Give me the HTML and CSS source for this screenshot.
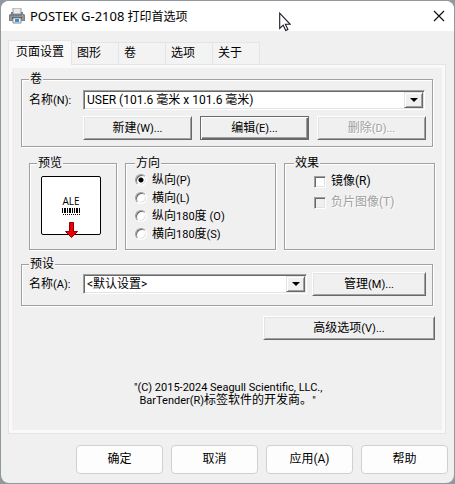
FILE: index.html
```html
<!DOCTYPE html>
<html lang="zh-CN">
<head>
    <meta charset="UTF-8">
    <meta name="viewport" content="width=device-width, initial-scale=1.0">
    <title>POSTEK G-2108 打印首选项</title>
    <link rel="stylesheet" href="styles.css">
</head>
<body>
    <main class="window">
        <header class="titlebar">
            <svg class="printer" width="16" height="16" viewBox="0 0 16 16" aria-hidden="true">
                <path d="M4 0h8v6H4z" fill="#e9eaec" stroke="#9a9da1" stroke-width="1"/>
                <path d="M2 4h2v2h8V4h2v2h1l1 1v6H0V7l1-1h1z" fill="#7b7e82"/>
                <path d="M1 8h14v4H1z" fill="#909397"/>
                <path d="M3 9h10v2H3z" fill="#4d5054"/>
                <path d="M4 10h8v5H4z" fill="#f4f8fb" stroke="#85898d" stroke-width="1"/>
                <path d="M6 11h4v3H6z" fill="#3291cc"/>
                <path d="M13 7h1v1h-1z" fill="#7ce07c"/>
            </svg>
            <h1><span class="model">POSTEK G-2108</span> 打印首选项</h1>
            <button class="close" type="button" aria-label="关闭">
                <svg width="12" height="12" viewBox="0 0 12 12"><path d="M1 1l10 10M11 1L1 11" stroke="#111" stroke-width="1.2"/></svg>
            </button>
        </header>

        <div class="tabs" role="tablist">
            <button class="tab active" type="button" role="tab" aria-selected="true">页面设置</button>
            <button class="tab" type="button" role="tab">图形</button>
            <button class="tab" type="button" role="tab">卷</button>
            <button class="tab" type="button" role="tab">选项</button>
            <button class="tab" type="button" role="tab">关于</button>
        </div>

        <section class="panel">
            <fieldset class="group">
                <legend>卷</legend>
                <div class="row">
                    <label class="name" for="stock">名称<span class="latin">(N):</span></label>
                    <div class="combo stock">
                        <select id="stock"><option>USER (101.6 毫米 x 101.6 毫米)</option></select>
                    </div>
                </div>
                <div class="row stock-buttons">
                    <button class="btn" type="button">新建<span class="latin">(W)...</span></button>
                    <button class="btn default" type="button">编辑<span class="latin">(E)...</span></button>
                    <button class="btn" type="button" disabled>删除<span class="latin">(D)...</span></button>
                </div>
            </fieldset>

            <div class="middle">
                <fieldset class="group preview">
                    <legend>预览</legend>
                    <svg width="60" height="64" viewBox="0 0 60 64">
                        <rect x=".5" y=".5" width="59" height="58" rx="1.5" fill="#fff" stroke="#000"/>
                        <text class="ale" x="30" y="29" text-anchor="middle">ALE</text>
                        <path d="M21 32h1v5h-1zM23 32h2v5h-2zM26 32h1v5h-1zM28 32h2v5h-2zM31 32h1v5h-1zM33 32h1v5h-1zM35 32h2v5h-2zM38 32h1v5h-1z"/>
                        <path d="M22 38.5h17" stroke="#000" stroke-dasharray="1 1"/>
                        <path d="M28.5 46.5h4v9h4L30.500 61.500l-6-6h4z" fill="#f00000" stroke="#8c0000"/>
                    </svg>
                </fieldset>

                <fieldset class="group options">
                    <legend>方向</legend>
                    <label class="radio"><input type="radio" name="orient" checked>纵向<span class="latin">(P)</span></label>
                    <label class="radio"><input type="radio" name="orient">横向<span class="latin">(L)</span></label>
                    <label class="radio"><input type="radio" name="orient">纵向<span class="latin">180</span>度&nbsp;<span class="latin">(O)</span></label>
                    <label class="radio"><input type="radio" name="orient">横向<span class="latin">180</span>度<span class="latin">(S)</span></label>
                </fieldset>

                <fieldset class="group options">
                    <legend>效果</legend>
                    <label class="check"><input type="checkbox">镜像(R)</label>
                    <label class="check disabled"><input type="checkbox" disabled>负片图像(T)</label>
                </fieldset>
            </div>

            <fieldset class="group preset">
                <legend>预设</legend>
                <div class="row">
                    <label class="name" for="preset">名称<span class="latin">(A):</span></label>
                    <div class="combo">
                        <select id="preset"><option>&lt;默认设置&gt;</option></select>
                    </div>
                    <button class="btn manage" type="button">管理<span class="latin">(M)...</span></button>
                </div>
            </fieldset>

            <button class="btn advanced" type="button">高级选项<span class="latin">(V)...</span></button>

            <p class="copyright"><span class="latin">"(C) 2015-2024 Seagull Scientific, LLC.,</span><br><span class="latin">&nbsp;&nbsp;BarTender(R)</span>标签软件的开发商。<span class="latin">"</span></p>
        </section>

        <footer class="actions">
            <button type="button">确定</button>
            <button type="button">取消</button>
            <button type="button">应用(A)</button>
            <button type="button">帮助</button>
        </footer>
    </main>

    <svg class="cursor" width="12" height="20" viewBox="0 0 12 20" aria-hidden="true">
        <path d="M.7 1.200v15.300l3.500-3.300 2.500 5.300 2.200-1-2.500-5.200h4.800z" fill="#fff" stroke="#1c1c28" stroke-width="1.100"/>
    </svg>
</body>
</html>
```

FILE: styles.css
```css
:root {
    --face: #f0f0f0;
    --shadow: #a0a0a0;
    --dark: #696969;
    --light: #e3e3e3;
}

* {
    box-sizing: border-box;
}

body {
    margin: 0;
    padding: 1px;
    min-height: 100vh;
    background: #8f999f;
    font-family: Roboto, "Noto Sans CJK SC", sans-serif;
    font-size: 12px;
    line-height: 15px;
    color: #000;
}

button, select {
    font: inherit;
    color: inherit;
}

.latin {
    font-size: 11px;
}

.window {
    background: var(--face);
    border-radius: 8px;
    overflow: hidden;
}

/* Title bar */
.titlebar {
    display: flex;
    align-items: center;
    height: 30px;
    padding: 0 9px 0 8px;
    background: #fff;
}

.titlebar h1 {
    flex: 1;
    margin: 0 0 0 5px;
    font-family: "Noto Sans", "Noto Sans CJK SC", sans-serif;
    font-size: 12px;
    font-weight: normal;
}

.model {
    font-size: 13px;
}

.close {
    display: flex;
    padding: 0;
    border: 0;
    background: none;
}

/* Tabs */
.tabs {
    display: flex;
    align-items: flex-end;
    padding: 9px 7px 0;
}

.tab {
    width: 47px;
    height: 22px;
    padding: 0 0 0 5px;
    border: 1px solid #e5e5e5;
    border-left: 0;
    border-bottom: 0;
    background: #f3f3f3;
    text-align: left;
}

.tab.active {
    width: 64px;
    height: 25px;
    margin-bottom: -1px;
    padding: 0 0 2px 7px;
    border-left: 1px solid #e5e5e5;
    background: #f9f9f9;
    position: relative;
}

.panel {
    margin: 0 8px 0 7px;
    padding: 7px 10px 26px 12px;
    border: 1px solid #e5e5e5;
    box-shadow: inset 0 0 0 3px #f9f9f9;
}

/* Etched group boxes */
.group {
    min-width: 0;
    margin: 0 2px 0 0;
    padding: 3px 6px 6px 7px;
    border: 1px solid var(--shadow);
    box-shadow: 1px 1px 0 #fff, inset 1px 1px 0 #fff;
}

.group legend {
    height: 15px;
    padding: 0 1px;
    background: var(--face);
}

.row {
    display: flex;
    align-items: center;
}

.name {
    width: 54px;
    flex: none;
}

.combo {
    position: relative;
    flex: 1;
}

.stock {
    margin-right: 1px;
}

.combo select {
    appearance: none;
    display: block;
    width: 100%;
    height: 20px;
    padding: 0 20px 0 3px;
    border: 1px solid;
    border-color: var(--shadow) #fff #fff var(--shadow);
    border-radius: 0;
    background: #fff;
    box-shadow: inset 1px 1px 0 var(--dark), inset -1px -1px 0 var(--light);
}

/* Drop-down arrow button */
.combo::before {
    content: "";
    position: absolute;
    top: 2px;
    right: 2px;
    bottom: 2px;
    width: 17px;
    border: 1px solid;
    border-color: var(--light) var(--dark) var(--dark) var(--light);
    background: var(--face);
    box-shadow: inset 1px 1px 0 #fff, inset -1px -1px 0 var(--shadow);
    pointer-events: none;
}

.combo::after {
    content: "";
    position: absolute;
    top: 8px;
    right: 7px;
    border: 4px solid transparent;
    border-top-color: #000;
    border-bottom: 0;
    pointer-events: none;
}

.btn {
    height: 24px;
    padding: 0 8px;
    border: 1px solid;
    border-color: #fff var(--dark) var(--dark) #fff;
    background: var(--face);
    box-shadow: inset 1px 1px 0 var(--light), inset -1px -1px 0 var(--shadow);
}

.btn.default {
    border-color: var(--dark);
    box-shadow: inset 1px 1px 0 #fff, inset -1px -1px 0 var(--dark), inset -2px -2px 0 var(--shadow);
}

.btn:disabled {
    color: var(--shadow);
    text-shadow: 1px 1px 0 #fff;
}

.stock-buttons {
    gap: 8px;
    margin-top: 6px;
    padding-left: 54px;
}

.stock-buttons .btn {
    flex: 1;
}

.middle {
    display: flex;
    gap: 8px;
    margin: 9px 0 7px 8px;
}

.middle .group {
    margin: 0;
}

.preview {
    width: 88px;
}

.preview svg {
    display: block;
    margin: 2px 0 0 4px;
}

.ale {
    font-family: "Open Sans", sans-serif;
    font-size: 10px;
}

.middle .options {
    flex: 1;
    padding: 0 9px 6px;
}

.options label {
    display: flex;
    align-items: center;
}

.radio {
    height: 18px;
}

.check {
    height: 21px;
    padding-left: 20px;
}

.check.disabled {
    color: var(--shadow);
    text-shadow: 1px 1px 0 #fff;
}

.options input {
    appearance: none;
    flex: none;
    width: 12px;
    height: 12px;
    margin: 0 5px 0 0;
    border: 1px solid;
    border-color: var(--shadow) #fff #fff var(--shadow);
    background: #fff;
    box-shadow: inset 1px 1px 0 var(--dark), inset -1px -1px 0 var(--light);
}

.options input[type="radio"] {
    border-radius: 50%;
}

.options input[type="radio"]:checked {
    background: radial-gradient(circle, #000 2px, #fff 3px);
}

.options input:disabled {
    background: var(--face);
}

.preset {
    padding-top: 0;
    padding-bottom: 9px;
}

.manage {
    width: 114px;
    margin-left: 5px;
}

.advanced {
    display: block;
    width: 172px;
    margin: 10px 0 0 auto;
}

.copyright {
    width: 188px;
    margin: 41px auto 0;
    line-height: 13px;
    white-space: nowrap;
}

/* Bottom buttons */
.actions {
    display: flex;
    justify-content: flex-end;
    gap: 8px;
    padding: 11px 6px 9px;
}

.actions button {
    width: 87px;
    height: 29px;
    border: 1px solid #d0d0d0;
    border-radius: 4px;
    background: #fdfdfd;
}

/* Mouse pointer over the title bar */
.cursor {
    position: absolute;
    left: 279px;
    top: 12px;
}
```
